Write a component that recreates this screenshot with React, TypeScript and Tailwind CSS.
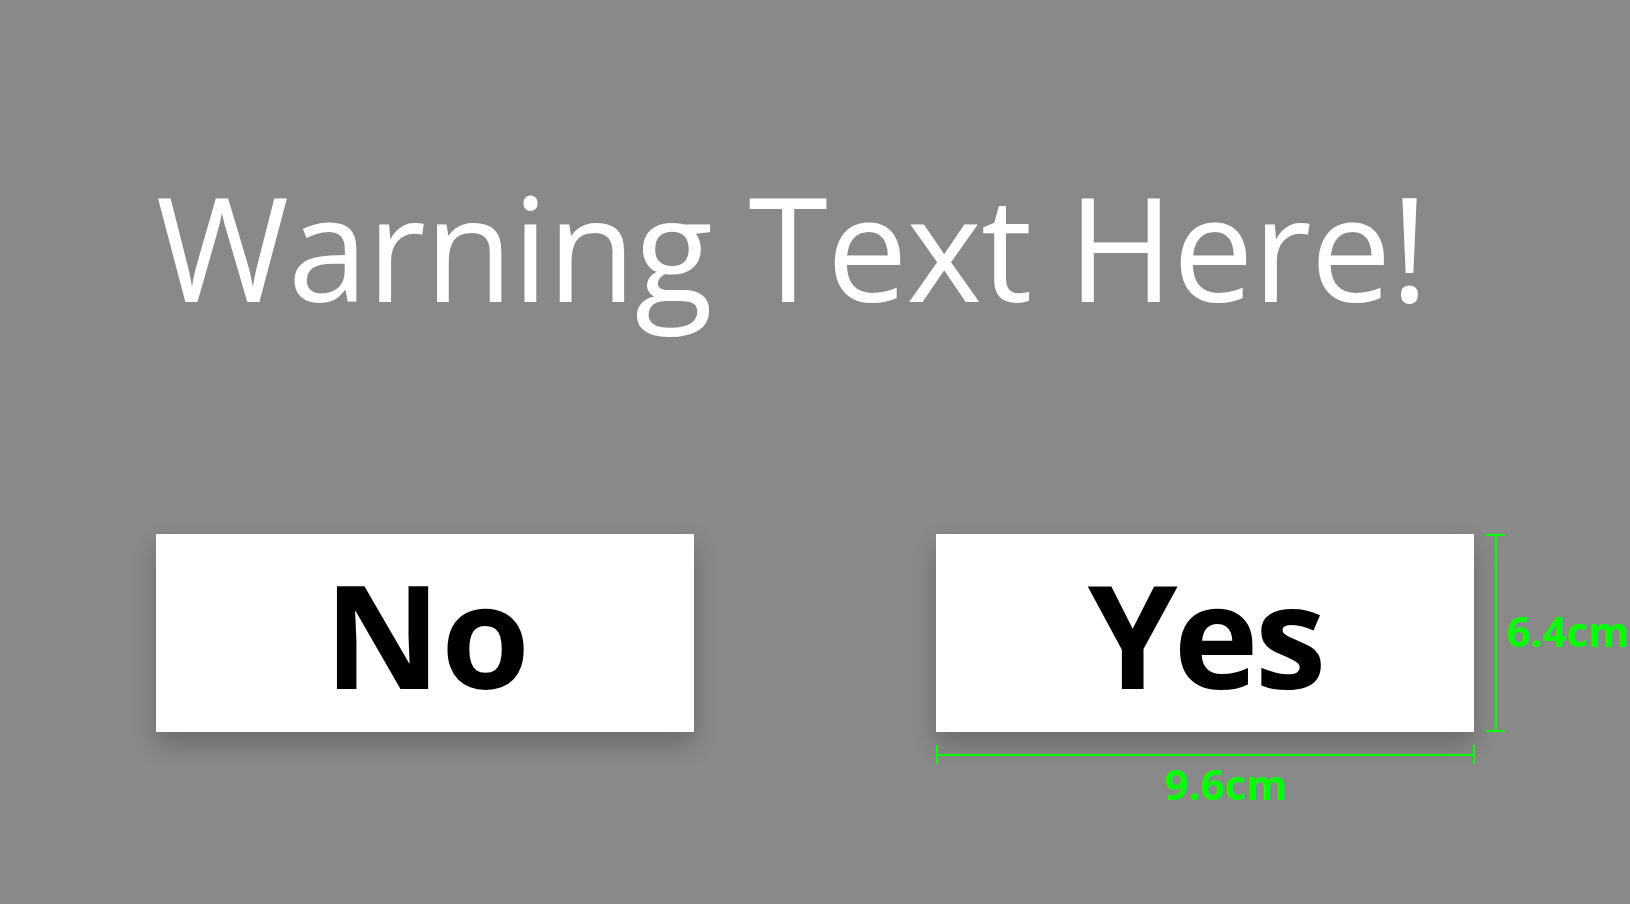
import React from 'react';

const font = { fontFamily: '"Open Sans", "Liberation Sans", sans-serif' };

function ChoiceButton({ children, extra }: { children: React.ReactNode; extra?: React.ReactNode }) {
  return (
    <div className="relative">
      <button
        className="w-[538px] h-[198px] bg-white flex items-center justify-center text-[144px] leading-none font-bold text-black shadow-[0_12px_24px_rgba(0,0,0,0.22)]"
        style={font}
      >
        {children}
      </button>
      {extra}
    </div>
  );
}

// Size markers drawn beside the button
function Dimensions() {
  return (
    <>
      <div className="absolute top-0 left-[550px] h-[198px] w-[19px] flex flex-col items-center justify-between">
        <div className="w-[19px] h-[2px] bg-[#00ff00]" />
        <div className="flex-1 w-[2px] bg-[#00ff00]" />
        <div className="w-[19px] h-[2px] bg-[#00ff00]" />
      </div>
      <span
        className="absolute top-[76px] left-[571px] text-[42px] leading-none font-bold text-[#00ff00] whitespace-nowrap"
        style={font}
      >
        6.4cm
      </span>
      <div className="absolute top-[211px] left-0 w-[539px] h-[19px] flex items-center justify-between">
        <div className="h-[19px] w-[2px] bg-[#00ff00]" />
        <div className="flex-1 h-[2px] bg-[#00ff00]" />
        <div className="h-[19px] w-[2px] bg-[#00ff00]" />
      </div>
      <span
        className="absolute top-[229px] left-[229px] text-[42px] leading-none font-bold text-[#00ff00] whitespace-nowrap"
        style={font}
      >
        9.6cm
      </span>
    </>
  );
}

export default function App() {
  return (
    <div className="w-full h-[904px] bg-[#898989] overflow-hidden pl-[156px] pt-[174px]">
      <h1 className="text-[144px] leading-none font-normal text-white whitespace-nowrap tracking-[-1px]" style={font}>
        Warning Text Here!
      </h1>
      <div className="flex gap-[242px] mt-[216px]">
        <ChoiceButton>
          <span className="pl-[4px]">No</span>
        </ChoiceButton>
        <ChoiceButton extra={<Dimensions />}>
          <span className="tracking-[-4px]">Yes</span>
        </ChoiceButton>
      </div>
    </div>
  );
}
